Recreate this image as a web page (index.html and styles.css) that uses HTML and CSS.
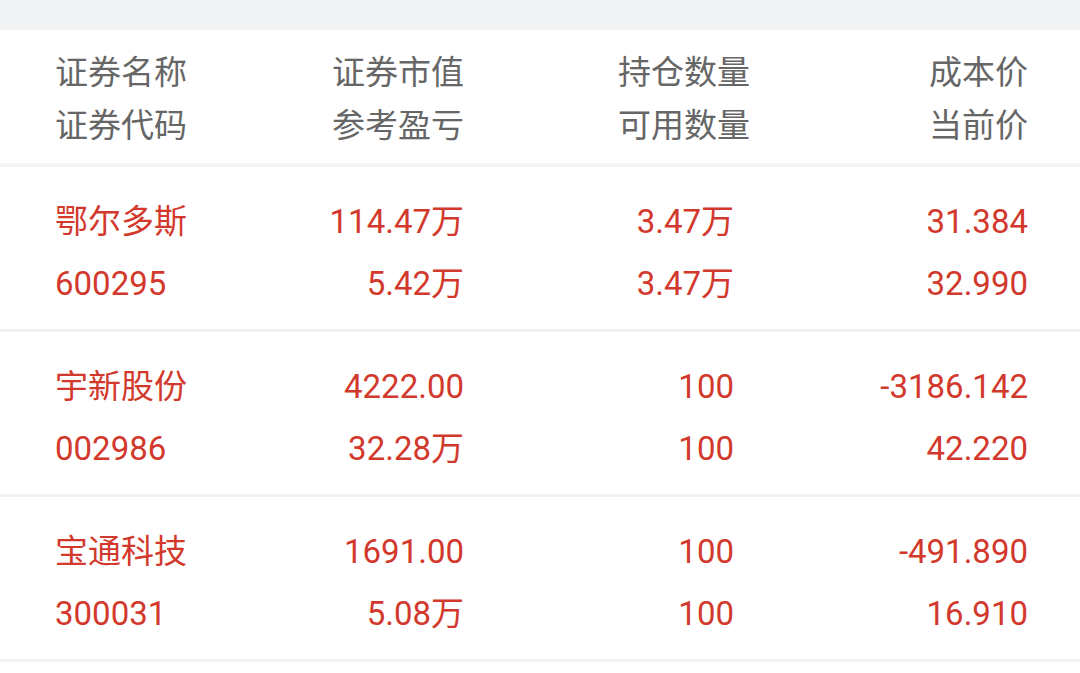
FILE: index.html
```html
<!DOCTYPE html>
<html lang="zh-CN">
<head>
<meta charset="utf-8">
<link rel="stylesheet" href="styles.css">
</head>
<body>
<div class="page">
  <div class="topbar"></div>
  <div class="grid header">
    <div class="cell c1"><div>证券名称</div><div>证券代码</div></div>
    <div class="cell c2"><div>证券市值</div><div>参考盈亏</div></div>
    <div class="cell c3h"><div>持仓数量</div><div>可用数量</div></div>
    <div class="cell c4"><div>成本价</div><div>当前价</div></div>
  </div>
  <div class="gap"></div>
  <div class="grid row">
    <div class="cell c1"><div>鄂尔多斯</div><div>600295</div></div>
    <div class="cell c2"><div>114.47万</div><div>5.42万</div></div>
    <div class="cell c3"><div>3.47万</div><div>3.47万</div></div>
    <div class="cell c4"><div>31.384</div><div>32.990</div></div>
  </div>
  <div class="grid row">
    <div class="cell c1"><div>宇新股份</div><div>002986</div></div>
    <div class="cell c2"><div>4222.00</div><div>32.28万</div></div>
    <div class="cell c3"><div>100</div><div>100</div></div>
    <div class="cell c4"><div>-3186.142</div><div>42.220</div></div>
  </div>
  <div class="grid row">
    <div class="cell c1"><div>宝通科技</div><div>300031</div></div>
    <div class="cell c2"><div>1691.00</div><div>5.08万</div></div>
    <div class="cell c3"><div>100</div><div>100</div></div>
    <div class="cell c4"><div>-491.890</div><div>16.910</div></div>
  </div>
</div>
</body>
</html>
```
FILE: styles.css
```css
* { box-sizing: border-box; }
html, body {
  margin: 0;
  padding: 0;
  background: #ffffff;
}
.page {
  width: 1080px;
  height: 673px;
  overflow: hidden;
  font-family: Roboto, "Noto Sans CJK SC", sans-serif;
  font-size: 33px;
}
.topbar {
  height: 30px;
  background: #f2f3f5;
}
.gap {
  height: 4px;
  background: #f2f3f5;
}
.grid {
  display: grid;
  grid-template-columns: 202px 207px 286px 278px;
  padding: 0 52px 0 55px;
}
.header {
  height: 133px;
  padding-top: 16px;
  color: #666666;
  line-height: 53px;
}
.row {
  height: 165px;
  padding-top: 24px;
  border-bottom: 3px solid #f1f1f2;
  color: #d2392c;
  line-height: 62px;
}
.cell {
  white-space: nowrap;
}
.c1 { text-align: left; }
.c2, .c3h, .c4 { text-align: right; }
.c3 { text-align: right; padding-right: 16px; }
```
